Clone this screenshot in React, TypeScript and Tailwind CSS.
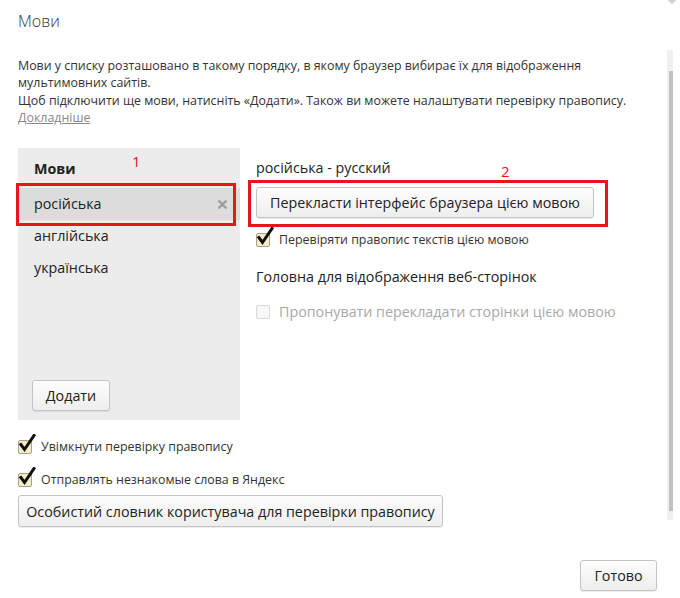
import React from "react";

const font = { fontFamily: '"Open Sans", "Noto Sans", sans-serif' };

function Check({ checked = true, disabled = false }: { checked?: boolean; disabled?: boolean }) {
  return (
    <span className="relative inline-block w-[14px] h-[14px] shrink-0">
      <span
        className={
          "absolute inset-0 rounded-[2px] border " +
          (disabled ? "border-[#d8d8d8] bg-[#f7f7f7]" : "border-[#a8a08a] bg-[#f6edc8]")
        }
      />
      {checked && (
        <svg className="absolute left-[1px] top-[-6px]" width="17" height="19" viewBox="0 0 17 19">
          <path d="M1.8 10.5 L5.5 15.5 L15 1.5" fill="none" stroke="#111" strokeWidth="3" strokeLinecap="square" />
        </svg>
      )}
    </span>
  );
}

function Btn({ children, className = "" }: { children: React.ReactNode; className?: string }) {
  return (
    <div
      className={
        "flex items-center justify-center whitespace-nowrap rounded-[3px] border border-[#c4c4c4] bg-gradient-to-b from-[#fdfdfd] to-[#eeeeee] text-[#222] shadow-[0_1px_1px_rgba(0,0,0,0.08)] " +
        className
      }
    >
      {children}
    </div>
  );
}

export default function App() {
  return (
    <div className="relative w-[680px] h-[598px] bg-white overflow-hidden text-[#333]" style={font}>
      <div className="flex flex-col pl-[18px] pr-[30px]">
        <div className="pt-[10px] text-[16px] leading-[22px] font-light text-[#333]">Мови</div>
        <div className="mt-[25px] text-[12.4px] leading-[17.3px] text-[#333] whitespace-nowrap">
          <div>Мови у списку розташовано в такому порядку, в якому браузер вибирає їх для відображення</div>
          <div>мультимовних сайтів.</div>
          <div>Щоб підключити ще мови, натисніть «Додати». Також ви можете налаштувати перевірку правопису.</div>
          <div className="text-[#888] underline">Докладніше</div>
        </div>

        <div className="mt-[22px] flex">
          <div className="w-[222px] h-[272px] bg-[#ececec] flex flex-col">
            <div className="pl-[16px] pt-[10px] h-[40px] text-[14.3px] font-bold text-[#222]">Мови</div>
            <div className="h-[32px] bg-[#dcdcdc] flex items-center justify-between pl-[16px] pr-[12px] text-[14.3px] text-[#222]">
              <span>російська</span>
              <svg width="11" height="11" viewBox="0 0 11 11">
                <path d="M1.5 1.5 L9.5 9.5 M9.5 1.5 L1.5 9.5" stroke="#9c9c9c" strokeWidth="2.4" />
              </svg>
            </div>
            <div className="h-[32px] flex items-center pl-[16px] text-[14.3px] text-[#222]">англійська</div>
            <div className="h-[32px] flex items-center pl-[16px] text-[14.3px] text-[#222]">українська</div>
            <div className="flex-1" />
            <Btn className="ml-[14px] mb-[9px] w-[78px] h-[31px] text-[14.3px]">Додати</Btn>
          </div>

          <div className="flex flex-col pl-[16px]">
            <div className="pt-[10px] text-[14.3px] leading-[20px] text-[#222]">російська - русский</div>
            <Btn className="mt-[9px] w-[338px] h-[31px] text-[14.3px]">Перекласти інтерфейс браузера цією мовою</Btn>
            <div className="mt-[13px] flex items-center gap-[9px] text-[12.4px] text-[#333]">
              <Check />
              <span>Перевіряти правопис текстів цією мовою</span>
            </div>
            <div className="mt-[16px] text-[14.3px] text-[#222]">Головна для відображення веб-сторінок</div>
            <div className="mt-[14px] flex items-center gap-[9px] text-[14.3px] text-[#a9a9a9]">
              <Check checked={false} disabled />
              <span>Пропонувати перекладати сторінки цією мовою</span>
            </div>
          </div>
        </div>

        <div className="mt-[18px] flex items-center gap-[9px] text-[12.4px] text-[#333]">
          <Check />
          <span>Увімкнути перевірку правопису</span>
        </div>
        <div className="mt-[14px] flex items-center gap-[9px] text-[12.4px] text-[#333]">
          <Check />
          <span>Отправлять незнакомые слова в Яндекс</span>
        </div>
        <Btn className="mt-[6px] w-[425px] h-[32px] text-[14.3px]">Особистий словник користувача для перевірки правопису</Btn>

        <div className="mt-[33px] flex justify-end">
          <Btn className="mr-[-7px] w-[77px] h-[31px] text-[14.3px]">Готово</Btn>
        </div>
      </div>

      {/* annotations */}
      <div className="absolute left-[16px] top-[183px] w-[220px] h-[43px] border-[3px] border-[#e8141e]" />
      <div className="absolute left-[132px] top-[154px] text-[15px] text-[#e8141e] leading-none">1</div>
      <div className="absolute left-[248px] top-[180px] w-[360px] h-[47px] border-[3px] border-[#e8141e]" />
      <div className="absolute left-[501px] top-[164px] text-[15px] text-[#e8141e] leading-none">2</div>

      {/* scrollbar */}
      <div className="absolute left-[667px] top-[50px] w-[6px] h-[470px] bg-[#f0f0f0]">
        <div className="ml-[2px] mt-[21px] w-[4px] h-[440px] bg-[#c1c1c1]" />
      </div>
      <div className="absolute left-[669px] top-[-3px] w-[6px] h-[6px] rotate-45 bg-[#d0d0d0]" />
    </div>
  );
}
